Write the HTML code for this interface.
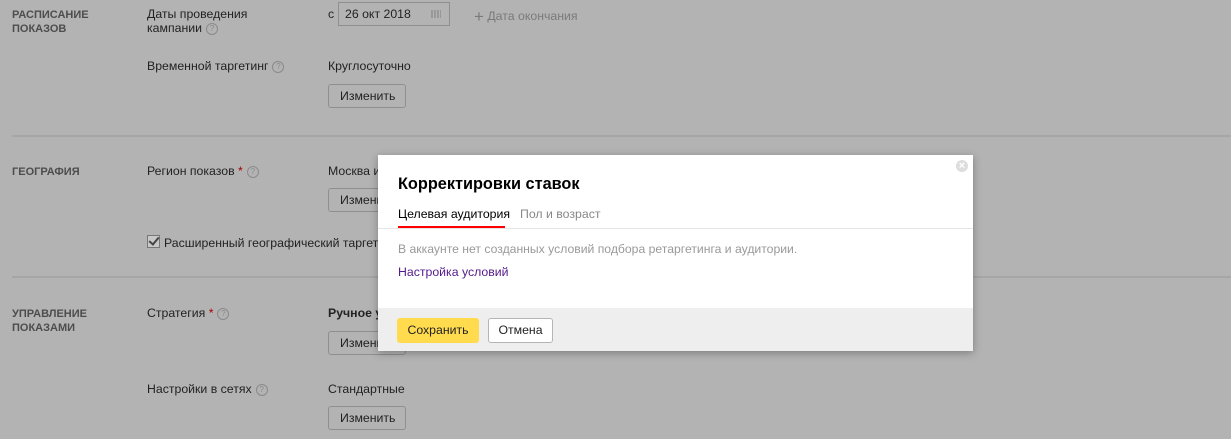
<!DOCTYPE html><html><head><meta charset="utf-8"><style>
body{margin:0;width:1231px;height:439px;background:#b3b3b3;font-family:"Liberation Sans",sans-serif;font-size:12.3px;color:#222;position:relative;overflow:hidden}
.a{position:absolute;white-space:nowrap}
.h{font-weight:bold;font-size:11px;color:#4d4d4d;line-height:14px}
.q{display:inline-block;width:10px;height:10px;border:1px solid #8a8a8a;border-radius:50%;font-size:8px;line-height:10px;text-align:center;color:#8a8a8a;vertical-align:1px;margin-left:4px}
.btn{position:absolute;height:24px;border:1px solid #8f8f8f;border-radius:3px;box-sizing:border-box;line-height:22px;padding:0 11px;font-size:12.3px}
.sep{position:absolute;left:12px;right:0;height:2px;background:#a6a6a6}
.r{color:#a00}
</style></head><body>
<div class="a h" style="left:12px;top:8px">РАСПИСАНИЕ<br>ПОКАЗОВ</div>
<div class="a" style="left:147px;top:7px;line-height:14px">Даты проведения<br>кампании<span class="q">?</span></div>
<div class="a" style="left:328px;top:7px">с</div>
<div class="a" style="left:338px;top:2px;width:112px;height:24px;border:1px solid #8f8f8f;box-sizing:border-box;padding:4px 6px;line-height:14px">26 окт 2018<span style="position:absolute;right:8px;top:7px;width:10px;height:8px;background:repeating-linear-gradient(90deg,#999 0 2px,transparent 2px 3px)"></span></div>
<div class="a" style="left:474px;top:7px;color:#7a7a7a"><span style="font-size:17px;vertical-align:-2px">+</span> Дата окончания</div>
<div class="a" style="left:147px;top:59px">Временной таргетинг<span class="q">?</span></div>
<div class="a" style="left:328px;top:59px">Круглосуточно</div>
<div class="btn" style="left:328px;top:84px;width:78px">Изменить</div>
<div class="sep" style="top:135px"></div>
<div class="a h" style="left:12px;top:165px">ГЕОГРАФИЯ</div>
<div class="a" style="left:147px;top:164px">Регион показов<span class="r"> *</span><span class="q">?</span></div>
<div class="a" style="left:328px;top:164px">Москва и</div>
<div class="btn" style="left:328px;top:188px;width:78px">Изменить</div>
<div class="a" style="left:147px;top:235px"><span style="display:inline-block;width:11px;height:11px;border:1px solid #777;background:#c8c8c8;vertical-align:-1px;margin-right:4px;position:relative"><span style="position:absolute;left:3px;top:-1px;width:4px;height:8px;border:solid #444;border-width:0 2px 2px 0;transform:rotate(40deg)"></span></span>Расширенный географический таргетинг</div>
<div class="sep" style="top:276px"></div>
<div class="a h" style="left:12px;top:307px">УПРАВЛЕНИЕ<br>ПОКАЗАМИ</div>
<div class="a" style="left:147px;top:306px">Стратегия<span class="r"> *</span><span class="q">?</span></div>
<div class="a" style="left:328px;top:306px;font-weight:bold">Ручное у</div>
<div class="btn" style="left:328px;top:331px;width:78px">Изменить</div>
<div class="a" style="left:147px;top:382px">Настройки в сетях<span class="q">?</span></div>
<div class="a" style="left:328px;top:382px">Стандартные</div>
<div class="btn" style="left:328px;top:406px;width:78px">Изменить</div>

<div style="position:absolute;left:378px;top:155px;width:595px;height:196px;background:#fff;box-shadow:0 2px 8px rgba(0,0,0,.3)">
<div style="position:absolute;right:5px;top:5px;width:12px;height:12px;border-radius:50%;background:#ddd;color:#fff;font-size:11px;line-height:12px;text-align:center;font-weight:bold">×</div>
<div class="a" style="left:20px;top:20px;font-size:16.3px;font-weight:bold;color:#000">Корректировки ставок</div>
<div class="a" style="left:20px;top:52px;color:#000">Целевая аудитория</div>
<div class="a" style="left:20px;top:71px;width:107px;height:2px;background:#f00"></div>
<div class="a" style="left:142px;top:52px;color:#888">Пол и возраст</div>
<div class="a" style="left:0;right:0;top:73px;height:1px;background:#e5e5e5"></div>
<div class="a" style="left:20px;top:87px;color:#999;font-size:12.2px">В аккаунте нет созданных условий подбора ретаргетинга и аудитории.</div>
<div class="a" style="left:20px;top:110px;color:#551a8b">Настройка условий</div>
<div style="position:absolute;left:0;right:0;top:153px;bottom:0;background:#eee">
<div class="btn" style="left:19px;top:10px;height:25px;border:0;background:#ffdb4d;line-height:25px;width:82px;text-align:center;padding:0">Сохранить</div>
<div class="btn" style="left:110px;top:10px;height:25px;background:#fff;border-color:#b5b5b5;line-height:23px;width:65px;text-align:center;padding:0">Отмена</div>
</div></div>
</body></html>
